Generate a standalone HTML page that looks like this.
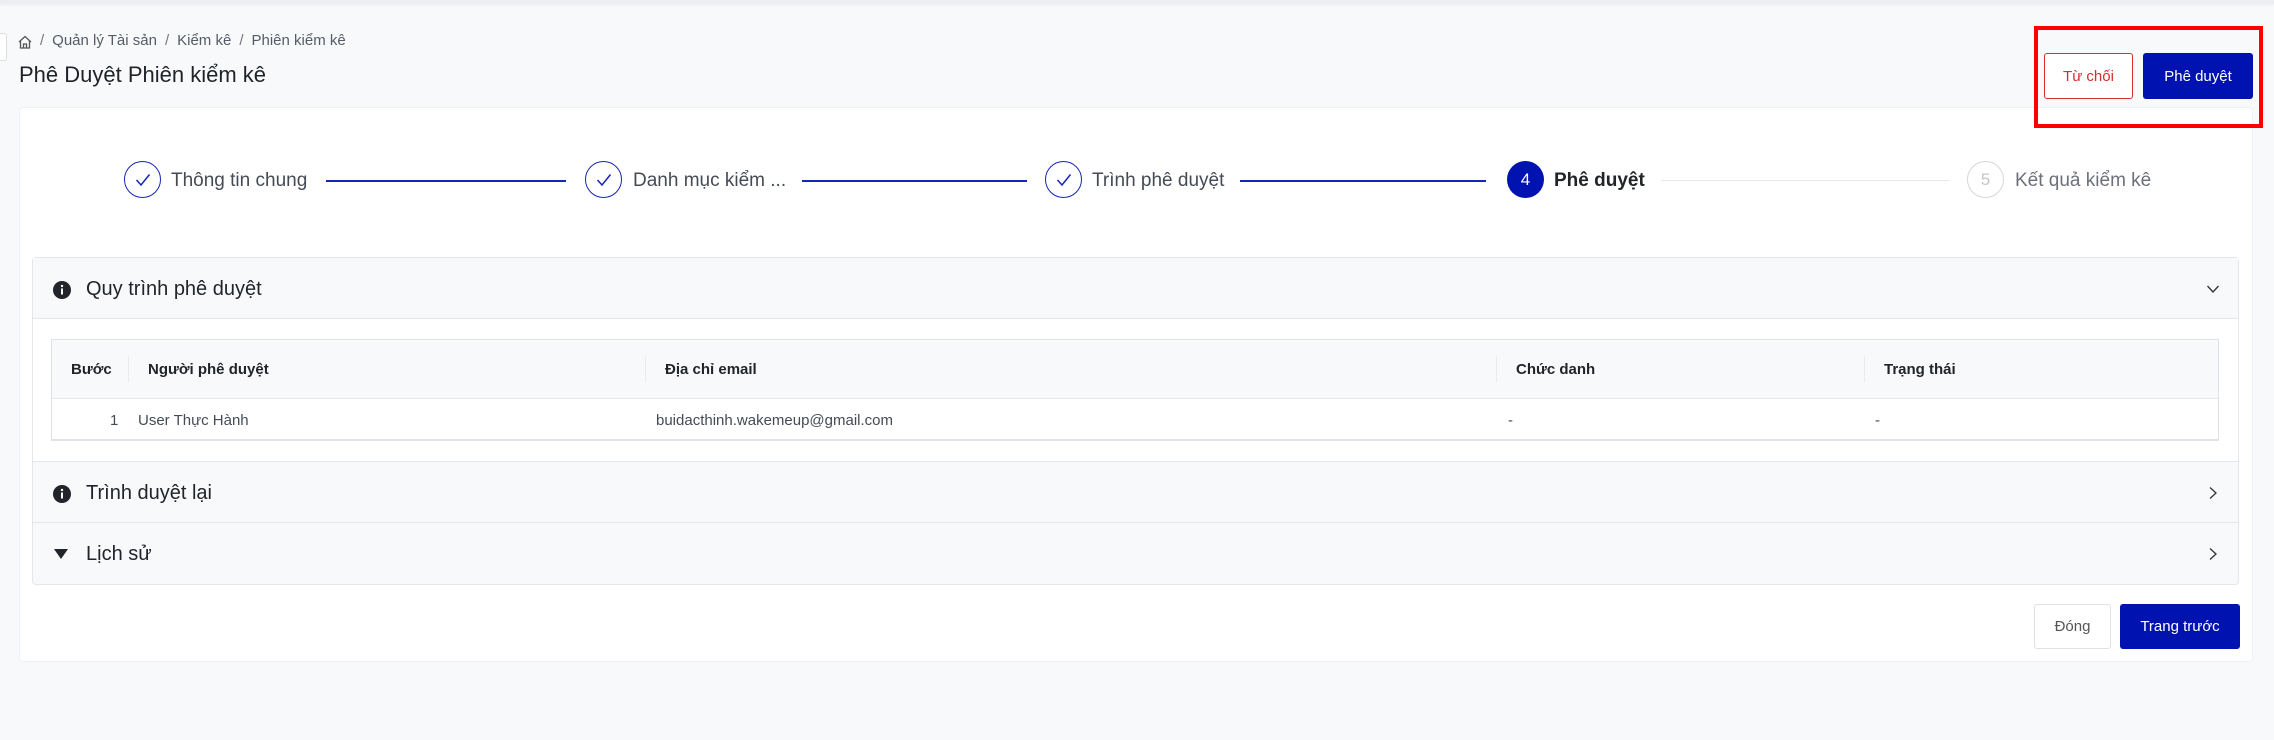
<!DOCTYPE html>
<html><head><meta charset="utf-8"><style>
*{box-sizing:border-box;margin:0;padding:0}
body{width:2274px;height:740px;background:#f8f9fb;font-family:"Liberation Sans",sans-serif;color:#212529;position:relative;overflow:hidden}
.abs{position:absolute}
.topbar{left:0;top:0;width:2274px;height:4px;background:#eceef1;box-shadow:0 1px 2px rgba(0,0,0,.06)}
.bc{left:26px;top:32px;font-size:15px;color:#555c66;white-space:nowrap}
.bc span{margin:0 8px;color:#777}
.title{left:19px;top:62px;font-size:22px;color:#1f2329}
.card{left:19px;top:107px;width:2234px;height:555px;background:#fff;border:1px solid #eef0f3;border-radius:4px}
.btn{display:flex;align-items:center;justify-content:center;font-size:15px;border-radius:3px}
.circle{width:37px;height:37px;border-radius:50%;display:flex;align-items:center;justify-content:center;font-size:17px}
.stxt{font-size:19px;color:#444b55;white-space:nowrap}
.line{height:1.5px;background:#1525b8}
.panel{left:32px;width:2207px;background:#f8f9fb;border:1px solid #e3e6ea;}
.ph{font-size:20px;color:#212529}
.th{font-size:15px;font-weight:bold;color:#212529;white-space:nowrap}
.td{font-size:15px;color:#444b55;white-space:nowrap}
.div{width:1px;height:26px;background:#e9ecef;top:356px}
</style></head><body>
<div class="abs topbar"></div>
<div class="abs" style="left:0;top:33px;width:7px;height:28px;background:#fff;border:1px solid #ddd;border-left:none;border-radius:0 3px 3px 0"></div>
<svg class="abs" style="left:17px;top:34px" width="16" height="16" viewBox="0 0 16 16" fill="none" stroke="#555" stroke-width="1.3"><path d="M2 8 L8 2.5 L14 8 M3.5 6.8 V14 H12.5 V6.8 M6.5 14 V10 H9.5 V14"/></svg>
<div class="abs bc" style="left:40px"><span style="margin-left:0">/</span>Quản lý Tài sản<span>/</span>Kiểm kê<span>/</span>Phiên kiểm kê</div>
<div class="abs title">Phê Duyệt Phiên kiểm kê</div>

<div class="abs card"></div>

<div class="abs" style="left:2034px;top:26px;width:229px;height:102px;border:4px solid #ff0000"></div>
<div class="abs btn" style="left:2044px;top:53px;width:89px;height:46px;border:1px solid #d32f2f;color:#d32f2f;background:#fff">Từ chối</div>
<div class="abs btn" style="left:2143px;top:53px;width:110px;height:46px;background:#0012b0;color:#fff">Phê duyệt</div>

<div class="abs circle" style="left:124px;top:161px;border:1.5px solid #1525b8"><svg width="16" height="14" viewBox="0 0 16 14"><path d="M1.5 7 L6 12 L14.5 1.5" fill="none" stroke="#1525b8" stroke-width="1.5"/></svg></div>
<div class="abs stxt" style="left:171px;top:170px">Thông tin chung</div>
<div class="abs line" style="left:326px;top:180px;width:240px"></div>
<div class="abs circle" style="left:585px;top:161px;border:1.5px solid #1525b8"><svg width="16" height="14" viewBox="0 0 16 14"><path d="M1.5 7 L6 12 L14.5 1.5" fill="none" stroke="#1525b8" stroke-width="1.5"/></svg></div>
<div class="abs stxt" style="left:633px;top:170px">Danh mục kiểm ...</div>
<div class="abs line" style="left:802px;top:180px;width:225px"></div>
<div class="abs circle" style="left:1045px;top:161px;border:1.5px solid #1525b8"><svg width="16" height="14" viewBox="0 0 16 14"><path d="M1.5 7 L6 12 L14.5 1.5" fill="none" stroke="#1525b8" stroke-width="1.5"/></svg></div>
<div class="abs stxt" style="left:1092px;top:170px">Trình phê duyệt</div>
<div class="abs line" style="left:1240px;top:180px;width:246px"></div>
<div class="abs circle" style="left:1507px;top:161px;background:#0012b0;color:#fff">4</div>
<div class="abs stxt" style="left:1554px;top:170px;font-weight:bold;color:#212529">Phê duyệt</div>
<div class="abs" style="left:1661px;top:180px;width:288px;height:1px;background:#e5e7eb"></div>
<div class="abs circle" style="left:1967px;top:161px;border:1.5px solid #d5d7db;color:#c4c6ca">5</div>
<div class="abs stxt" style="left:2015px;top:170px;color:#6b717a">Kết quả kiểm kê</div>

<div class="abs panel" style="top:257px;height:205px;border-radius:4px 4px 0 0;background:#fff"></div>
<div class="abs" style="left:33px;top:258px;width:2205px;height:61px;background:#f8f9fb;border-bottom:1px solid #e3e6ea"></div>
<svg class="abs" style="left:52px;top:280px" width="20" height="20" viewBox="0 0 20 20"><circle cx="10" cy="10" r="9" fill="#212529"/><rect x="9" y="8.5" width="2" height="6" fill="#fff"/><circle cx="10" cy="6" r="1.2" fill="#fff"/></svg>
<div class="abs ph" style="left:86px;top:278px">Quy trình phê duyệt</div>
<svg class="abs" style="left:2206px;top:284px" width="14" height="10" viewBox="0 0 14 10"><path d="M1.5 2 L7 8 L12.5 2" fill="none" stroke="#333" stroke-width="1.3"/></svg>

<div class="abs" style="left:51px;top:339px;width:2168px;height:102px;border:1px solid #dfe2e6;border-bottom-width:2px"></div>
<div class="abs" style="left:52px;top:340px;width:2166px;height:59px;background:#f8f9fb;border-bottom:1px solid #e5e7eb"></div>
<div class="abs th" style="left:71px;top:361px">Bước</div>
<div class="abs div" style="left:128px"></div>
<div class="abs th" style="left:148px;top:361px">Người phê duyệt</div>
<div class="abs div" style="left:645px"></div>
<div class="abs th" style="left:665px;top:361px">Địa chỉ email</div>
<div class="abs div" style="left:1496px"></div>
<div class="abs th" style="left:1516px;top:361px">Chức danh</div>
<div class="abs div" style="left:1864px"></div>
<div class="abs th" style="left:1884px;top:361px">Trạng thái</div>
<div class="abs td" style="left:110px;top:412px">1</div>
<div class="abs td" style="left:138px;top:412px">User Thực Hành</div>
<div class="abs td" style="left:656px;top:412px">buidacthinh.wakemeup@gmail.com</div>
<div class="abs td" style="left:1508px;top:412px">-</div>
<div class="abs td" style="left:1875px;top:412px">-</div>

<div class="abs panel" style="top:461px;height:62px"></div>
<svg class="abs" style="left:52px;top:484px" width="20" height="20" viewBox="0 0 20 20"><circle cx="10" cy="10" r="9" fill="#212529"/><rect x="9" y="8.5" width="2" height="6" fill="#fff"/><circle cx="10" cy="6" r="1.2" fill="#fff"/></svg>
<div class="abs ph" style="left:86px;top:482px">Trình duyệt lại</div>
<svg class="abs" style="left:2208px;top:486px" width="10" height="14" viewBox="0 0 10 14"><path d="M2 1.5 L8 7 L2 12.5" fill="none" stroke="#333" stroke-width="1.3"/></svg>

<div class="abs panel" style="top:522px;height:63px;border-radius:0 0 4px 4px"></div>
<svg class="abs" style="left:54px;top:548px" width="14" height="12" viewBox="0 0 14 12"><path d="M0 1 H14 L7 11 Z" fill="#212529"/></svg>
<div class="abs ph" style="left:86px;top:543px">Lịch sử</div>
<svg class="abs" style="left:2208px;top:547px" width="10" height="14" viewBox="0 0 10 14"><path d="M2 1.5 L8 7 L2 12.5" fill="none" stroke="#333" stroke-width="1.3"/></svg>

<div class="abs btn" style="left:2034px;top:604px;width:77px;height:45px;border:1px solid #dee1e5;color:#555;background:#fff">Đóng</div>
<div class="abs btn" style="left:2120px;top:604px;width:120px;height:45px;background:#0012b0;color:#fff">Trang trước</div>
</body></html>
